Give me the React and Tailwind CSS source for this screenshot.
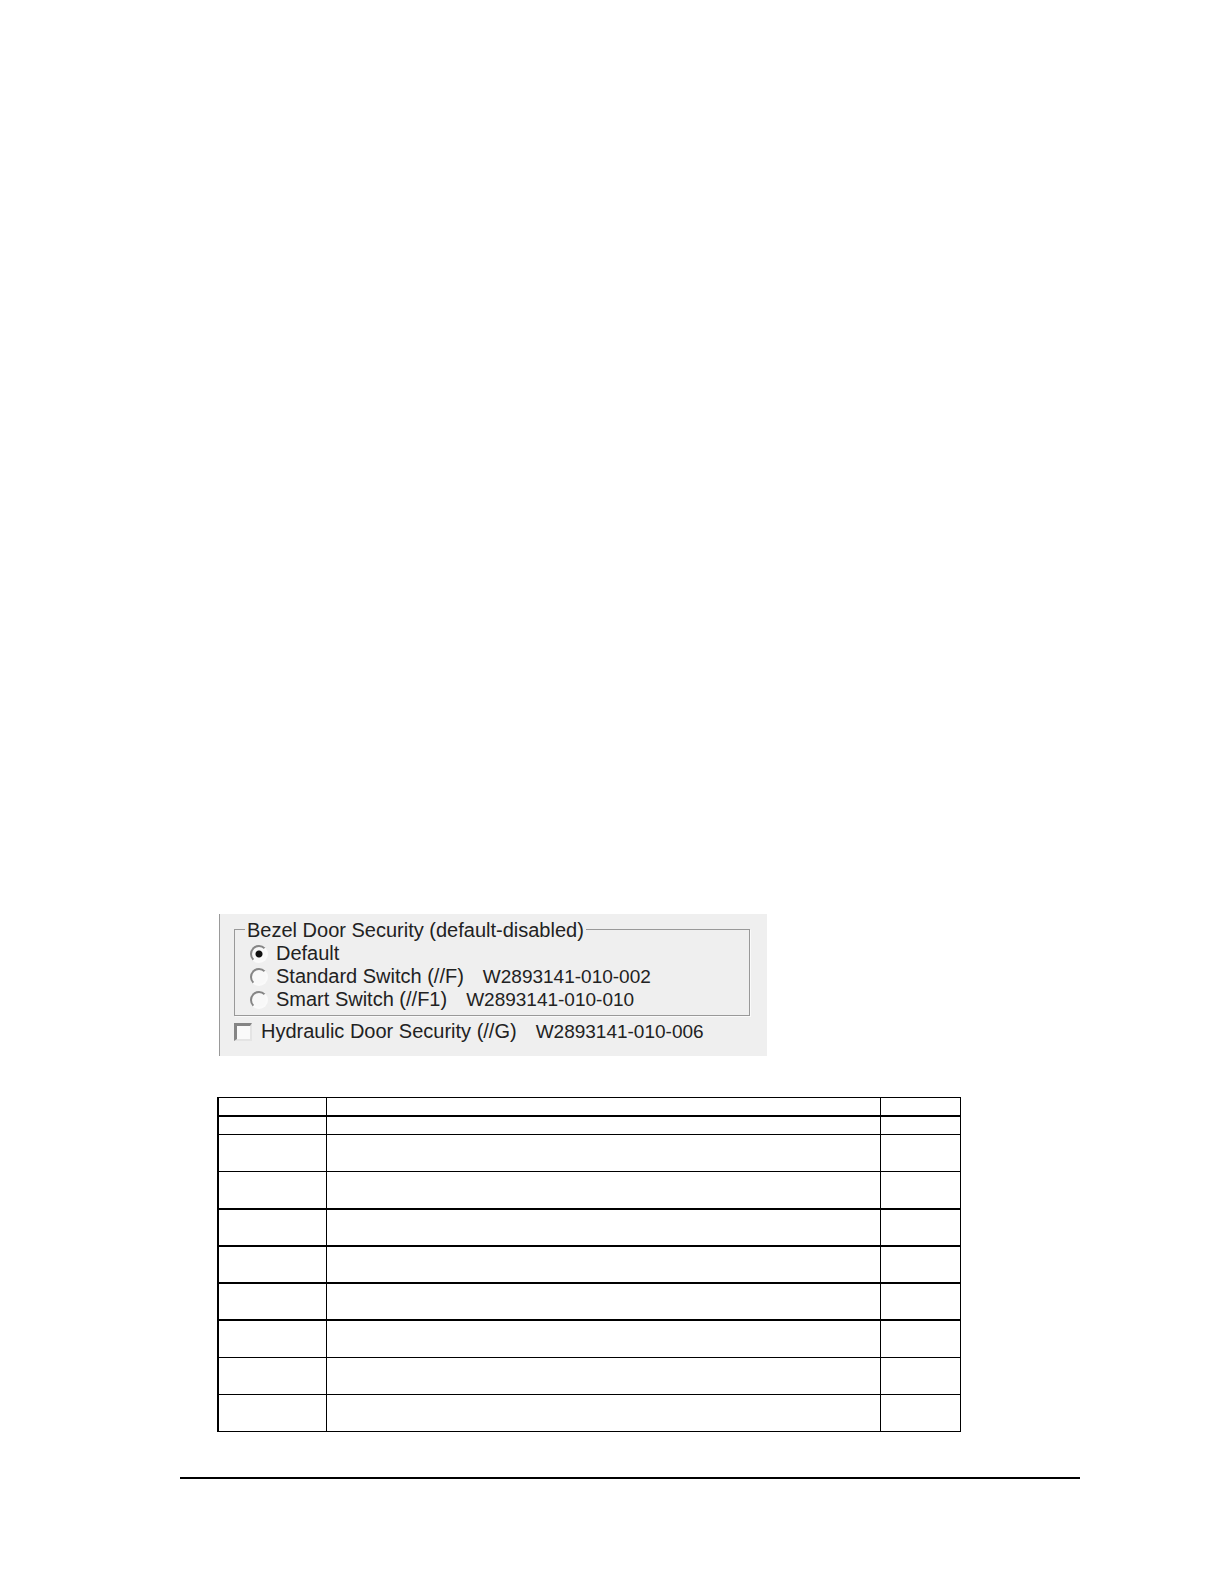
import { useState } from "react";

const SWITCH_OPTIONS = [
  { id: "default", label: "Default" },
  {
    id: "standard",
    label: "Standard Switch (//F)",
    part: "W2893141-010-002",
  },
  {
    id: "smart",
    label: "Smart Switch (//F1)",
    part: "W2893141-010-010",
  },
];

// Row height and bottom rule of every row in the blank form table.
const FORM_ROWS = [
  "h-[19px] *:border-b-2",
  "h-[18px] *:border-b",
  "h-[37px] *:border-b",
  "h-[38px] *:border-b-2",
  "h-[37px] *:border-b-2",
  "h-[37px] *:border-b-2",
  "h-[37px] *:border-b-2",
  "h-[37px] *:border-b",
  "h-[37px] *:border-b",
  "h-[37px] *:border-b",
];

function PartNumber({ children }) {
  return <span className="ml-[19px] text-[19px]">{children}</span>;
}

function RadioOption({ option, checked, onSelect }) {
  return (
    <label className="flex h-[23px] items-center text-[20px] leading-[23px]">
      <input
        type="radio"
        name="bezel-door"
        checked={checked}
        onChange={() => onSelect(option.id)}
        className="mr-2 h-[18px] w-[18px] shrink-0 appearance-none rounded-full border-2 border-t-[#858585] border-r-[#fafafa] border-b-[#fafafa] border-l-[#858585] bg-[#f8f8f8] checked:bg-[radial-gradient(circle,#111_0_3px,#f8f8f8_4px)]"
      />
      <span>{option.label}</span>
      {option.part && <PartNumber>{option.part}</PartNumber>}
    </label>
  );
}

function SecurityPanel() {
  const [doorSwitch, setDoorSwitch] = useState("default");
  const [hydraulic, setHydraulic] = useState(false);

  return (
    <form className="ml-[39px] max-w-[548px] border-l border-[#999] bg-[#efefef] pt-[3px] pr-[17px] pb-[13px] pl-[14px] text-[#222]">
      <fieldset className="border border-[#999] pb-1 pl-[15px] shadow-[1px_1px_0_#fafafa]">
        <legend className="-ml-[5px] px-[2px] pt-[2px] text-[20px] leading-[23px]">
          Bezel Door Security (default-disabled)
        </legend>
        {SWITCH_OPTIONS.map((option) => (
          <RadioOption
            key={option.id}
            option={option}
            checked={doorSwitch === option.id}
            onSelect={setDoorSwitch}
          />
        ))}
      </fieldset>
      <label className="mt-1 flex items-center text-[20px] leading-[23px]">
        <input
          type="checkbox"
          checked={hydraulic}
          onChange={() => setHydraulic(!hydraulic)}
          className="mr-[9px] h-[18px] w-[18px] shrink-0 appearance-none border-2 border-t-[3px] border-l-[3px] border-t-[#858585] border-r-[#e4e4e4] border-b-[#e4e4e4] border-l-[#858585] bg-[#fafafa] checked:bg-[#555]"
        />
        <span>Hydraulic Door Security (//G)</span>
        <PartNumber>W2893141-010-006</PartNumber>
      </label>
    </form>
  );
}

function FormTable() {
  return (
    <table className="mt-[41px] ml-[37px] w-full max-w-[744px] table-fixed border-separate border-spacing-0 border-t border-l-2 border-black">
      <colgroup>
        <col className="w-[108px]" />
        <col />
        <col className="w-[80px]" />
      </colgroup>
      <tbody>
        {FORM_ROWS.map((row, index) => (
          <tr key={index} className={row}>
            <td className="border-r border-black p-0"></td>
            <td className="border-r border-black p-0"></td>
            <td className="border-r border-black p-0"></td>
          </tr>
        ))}
      </tbody>
    </table>
  );
}

export default function App() {
  return (
    <main className="flex min-h-screen flex-col justify-end bg-white pr-36 pb-[105px] pl-[180px] font-['Liberation_Sans',Arial,sans-serif]">
      <SecurityPanel />
      <FormTable />
      <hr className="mt-[45px] border-t-2 border-black" />
    </main>
  );
}
